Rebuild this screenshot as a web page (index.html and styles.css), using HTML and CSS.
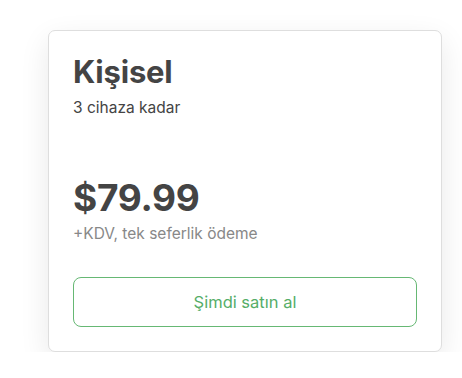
FILE: index.html
```html
<!DOCTYPE html>
<html lang="tr">
<head>
<meta charset="utf-8">
<link rel="stylesheet" href="styles.css">
</head>
<body>
<div class="card">
  <h2 class="title">Kişisel</h2>
  <p class="sub">3 cihaza kadar</p>
  <div class="price">$79.99</div>
  <p class="note">+KDV, tek seferlik ödeme</p>
  <button class="buy">Şimdi satın al</button>
</div>
</body>
</html>
```
FILE: styles.css
```css
html, body {
  margin: 0;
  padding: 0;
  background: #fff;
}
body {
  font-family: Inter, "Noto Sans", sans-serif;
  color: #444;
  padding: 30px 0 0 48px;
}
.card {
  box-sizing: border-box;
  width: 394px;
  height: 322px;
  border: 1px solid #dedede;
  border-radius: 7px;
  background: #fff;
  padding: 24px;
  box-shadow: 0 10px 30px rgba(0,0,0,0.09);
  display: flex;
  flex-direction: column;
}
.title {
  margin: 0;
  font-size: 31px;
  font-weight: 700;
  line-height: 34px;
  letter-spacing: -0.2px;
}
.sub {
  margin: 9px 0 0;
  font-size: 15.5px;
  line-height: 20px;
}
.price {
  margin-top: 58px;
  font-size: 37px;
  font-weight: 700;
  line-height: 44px;
  letter-spacing: -0.3px;
}
.note {
  margin: 4px 0 0;
  font-size: 15.5px;
  line-height: 20px;
  color: #888;
}
.buy {
  margin-top: auto;
  height: 50px;
  border: 1px solid #66b874;
  border-radius: 8px;
  background: #fff;
  color: #55ad68;
  font-family: inherit;
  font-size: 16.5px;
}
```
